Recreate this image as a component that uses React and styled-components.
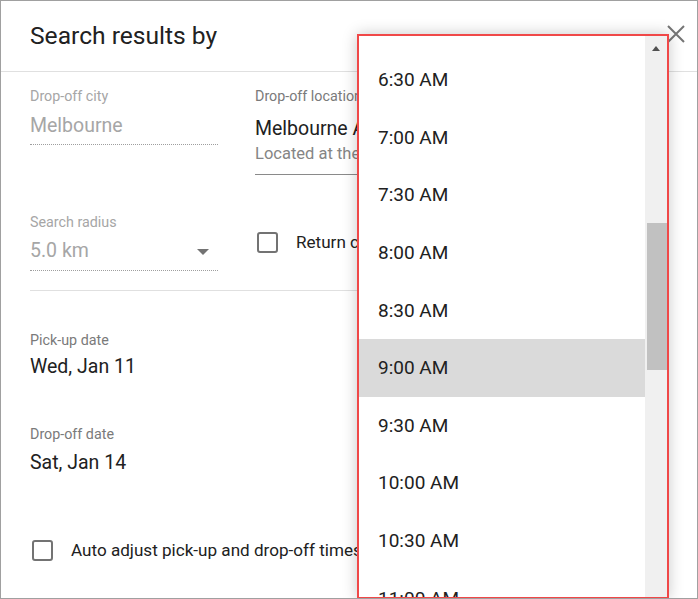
import React from "react";
import styled, { createGlobalStyle } from "styled-components";

const Global = createGlobalStyle`
  html, body { margin: 0; padding: 0; background: #fff; }
  body { font-family: Roboto, "Liberation Sans", sans-serif; }
  * { box-sizing: border-box; }
`;

const Frame = styled.div`
  position: relative;
  width: 698px;
  height: 599px;
  border: 1px solid #a0a0a0;
  background: #fff;
  overflow: hidden;
  color: #212121;
`;

const Header = styled.div`
  height: 71px;
  display: flex;
  align-items: center;
  justify-content: space-between;
  padding: 0 11px 0 29px;
  border-bottom: 1px solid #e0e0e0;
`;

const Title = styled.h1`
  margin: 0 0 1px 0;
  font-size: 24.6px;
  line-height: 30px;
  font-weight: 400;
  color: #212121;
`;

const Close = styled.button`
  border: 0;
  background: none;
  padding: 0;
  width: 20px;
  height: 20px;
  margin-top: -5px;
  display: flex;
  align-items: center;
  justify-content: center;
`;

const Body = styled.div`
  padding: 15px 29px 0 29px;
`;

const Columns = styled.div`
  display: flex;
  gap: 37px;
`;

const Column = styled.div`
  display: flex;
  flex-direction: column;
  width: ${(p) => p.$w || "auto"};
  flex: ${(p) => (p.$w ? "none" : 1)};
  min-width: 0;
`;

const Field = styled.div`
  display: flex;
  flex-direction: column;
  margin-top: ${(p) => p.$mt || 0}px;
  padding-bottom: ${(p) => p.$pb || 5}px;
  border-bottom: 1px ${(p) => p.$line || "dotted"} ${(p) => p.$lineColor || "#9e9e9e"};
`;

const Label = styled.div`
  font-size: 14.3px;
  line-height: 18px;
  color: ${(p) => (p.$muted ? "#a6a6a6" : "#7a7a7a")};
  white-space: nowrap;
`;

const Value = styled.div`
  font-size: 19.5px;
  line-height: 26px;
  margin-top: ${(p) => p.$mt || 8}px;
  color: ${(p) => (p.$muted ? "#a6a6a6" : "#212121")};
  white-space: nowrap;
  display: flex;
  align-items: center;
  justify-content: space-between;
`;

const SubValue = styled.div`
  font-size: 16.5px;
  line-height: 20px;
  margin-top: 2px;
  color: #858585;
  white-space: nowrap;
`;

const Caret = styled.span`
  width: 0;
  height: 0;
  border-left: 6px solid transparent;
  border-right: 6px solid transparent;
  border-top: 6px solid #737373;
  margin-right: 9px;
  margin-top: 1px;
`;

const CheckRow = styled.label`
  display: flex;
  align-items: center;
  gap: ${(p) => p.$gap || 18}px;
  font-size: 17.1px;
  line-height: 21px;
  color: #212121;
  white-space: nowrap;
  margin-top: ${(p) => p.$mt || 0}px;
  margin-left: ${(p) => p.$ml || 0}px;
`;

const Box = styled.span`
  width: 21px;
  height: 21px;
  border: 2px solid #737373;
  border-radius: 3px;
  flex: none;
`;

const Divider = styled.div`
  height: 1px;
  background: #e0e0e0;
  margin-top: 19px;
`;

const DateBlock = styled.div`
  margin-top: ${(p) => p.$mt}px;
  display: flex;
  flex-direction: column;
`;

const Dropdown = styled.div`
  position: absolute;
  left: 356px;
  top: 33px;
  width: 312px;
  height: 565px;
  background: #fff;
  border: 2px solid #f04848;
  box-shadow: 0 0 14px rgba(0, 0, 0, 0.22);
  display: flex;
  overflow: hidden;
`;

const List = styled.ul`
  list-style: none;
  margin: 0;
  padding: 15px 0 0 0;
  flex: 1;
  overflow: hidden;
`;

const Item = styled.li`
  height: 57.6px;
  display: flex;
  align-items: center;
  padding-left: 19px;
  font-size: 19px;
  color: #212121;
  white-space: nowrap;
  background: ${(p) => (p.$active ? "#dadada" : "transparent")};
`;

const Track = styled.div`
  width: 22px;
  background: #f0f0f0;
  position: relative;
  flex: none;
`;

const Arrow = styled.span`
  position: absolute;
  left: 7px;
  top: 10px;
  width: 0;
  height: 0;
  border-left: 4px solid transparent;
  border-right: 4px solid transparent;
  border-bottom: 5px solid #505050;
`;

const Thumb = styled.div`
  position: absolute;
  left: 2px;
  right: 0;
  top: 187px;
  height: 147px;
  background: #c1c1c1;
`;

const times = [
  "6:30 AM",
  "7:00 AM",
  "7:30 AM",
  "8:00 AM",
  "8:30 AM",
  "9:00 AM",
  "9:30 AM",
  "10:00 AM",
  "10:30 AM",
  "11:00 AM",
];

export default function App() {
  return (
    <>
      <Global />
      <Frame>
        <Header>
          <Title>Search results by</Title>
          <Close aria-label="Close">
            <svg width="18" height="18" viewBox="0 0 18 18">
              <path d="M1 1 L17 17 M17 1 L1 17" stroke="#757575" strokeWidth="2" fill="none" />
            </svg>
          </Close>
        </Header>
        <Body>
          <Columns>
            <Column $w="188px">
              <Field>
                <Label $muted>Drop-off city</Label>
                <Value $muted $mt={8}>Melbourne</Value>
              </Field>
              <Field $mt={68} $pb={6}>
                <Label $muted>Search radius</Label>
                <Value $muted $mt={7}>
                  5.0 km
                  <Caret />
                </Value>
              </Field>
            </Column>
            <Column>
              <Field $line="solid" $lineColor="#8a8a8a" $pb={10}>
                <Label>Drop-off location</Label>
                <Value $mt={11}>Melbourne Airport</Value>
                <SubValue>Located at the terminal</SubValue>
              </Field>
              <CheckRow $mt={57} $ml={2}>
                <Box />
                Return car to a different location
              </CheckRow>
            </Column>
          </Columns>
          <Divider />
          <DateBlock $mt={40}>
            <Label>Pick-up date</Label>
            <Value $mt={5}>Wed, Jan 11</Value>
          </DateBlock>
          <DateBlock $mt={45}>
            <Label>Drop-off date</Label>
            <Value $mt={7}>Sat, Jan 14</Value>
          </DateBlock>
          <CheckRow $mt={64} $ml={2}>
            <Box />
            Auto adjust pick-up and drop-off times
          </CheckRow>
        </Body>
        <Dropdown>
          <List>
            {times.map((t) => (
              <Item key={t} $active={t === "9:00 AM"}>
                {t}
              </Item>
            ))}
          </List>
          <Track>
            <Arrow />
            <Thumb />
          </Track>
        </Dropdown>
      </Frame>
    </>
  );
}
